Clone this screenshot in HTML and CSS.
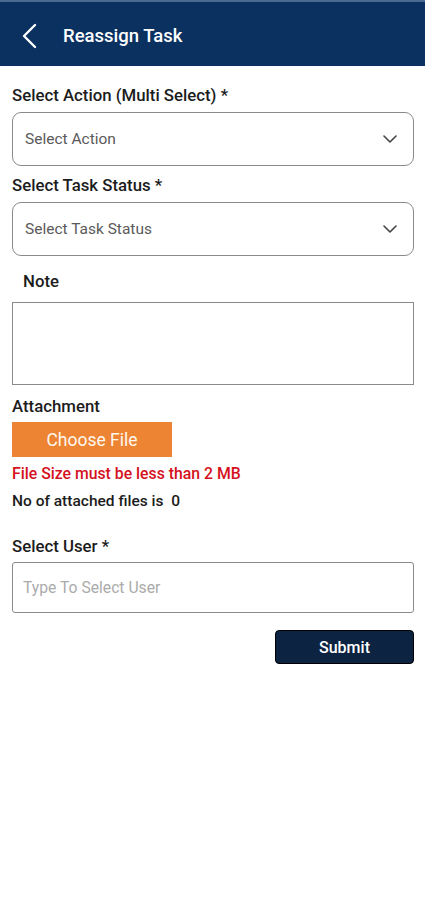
FILE: index.html
```html
<!DOCTYPE html>
<html lang="en">
<head>
    <meta charset="UTF-8">
    <meta name="viewport" content="width=device-width, initial-scale=1.0">
    <title>Reassign Task</title>
    <link rel="stylesheet" href="styles.css">
</head>
<body>
    <header>
        <a class="back" href="#">
            <svg width="16" height="26" viewBox="0 0 16 26"><path d="M14 2 L3 13 L14 24" fill="none" stroke="#fff" stroke-width="2.4" stroke-linecap="round" stroke-linejoin="round"/></svg>
        </a>
        <div class="title">Reassign Task</div>
    </header>
    <div class="container">
        <label class="lbl">Select Action (Multi Select) *</label>
        <div class="select">
            <span>Select Action</span>
            <svg width="14" height="8" viewBox="0 0 14 8"><path d="M1 1 L7 7 L13 1" fill="none" stroke="#444" stroke-width="1.6" stroke-linecap="round" stroke-linejoin="round"/></svg>
        </div>
        <label class="lbl">Select Task Status *</label>
        <div class="select">
            <span>Select Task Status</span>
            <svg width="14" height="8" viewBox="0 0 14 8"><path d="M1 1 L7 7 L13 1" fill="none" stroke="#444" stroke-width="1.6" stroke-linecap="round" stroke-linejoin="round"/></svg>
        </div>
        <label class="lbl note-lbl">Note</label>
        <textarea class="note"></textarea>
        <label class="lbl attach-lbl">Attachment</label>
        <button class="choose">Choose File</button>
        <p class="warn">File Size must be less than 2 MB</p>
        <p class="count">No of attached files is&nbsp; 0</p>
        <label class="lbl user-lbl">Select User *</label>
        <input class="user" type="text" placeholder="Type To Select User">
        <div class="actions">
            <button class="submit">Submit</button>
        </div>
    </div>
</body>
</html>
```

FILE: styles.css
```css
body {
    font-family: Roboto, "Noto Sans", Arial, sans-serif;
    margin: 0;
    padding: 0;
    background-color: #fff;
    color: #1c1c1c;
}
header {
    height: 66px;
    background-color: #0b3161;
    border-top: 2px solid #4a6a92;
    box-sizing: border-box;
    display: flex;
    align-items: center;
    padding: 3px 0 0 21px;
}
header .back {
    display: flex;
    width: 42px;
}
header .title {
    color: #fff;
    font-size: 18.5px;
    font-weight: 500;
}
.container {
    padding: 0 11px 0 12px;
    display: flex;
    flex-direction: column;
}
.lbl {
    display: block;
    font-size: 16.8px;
    font-weight: 500;
    line-height: 20px;
    color: #1c1c1c;
}
.container > .lbl:first-child {
    margin-top: 19px;
}
.select {
    height: 54px;
    box-sizing: border-box;
    border: 1.5px solid #8a8a8a;
    border-radius: 9px;
    margin: 7px 0 9px;
    display: flex;
    align-items: center;
    justify-content: space-between;
    padding: 0 16px 0 12px;
    font-size: 15.5px;
    color: #5a5a5a;
}
.note-lbl {
    margin: 6px 0 0 11px;
}
.note {
    height: 83px;
    box-sizing: border-box;
    border: 1.5px solid #8a8a8a;
    border-radius: 0;
    margin: 11px 0 0;
    resize: none;
    font-family: inherit;
}
.attach-lbl {
    margin-top: 11px;
}
.choose {
    width: 160px;
    height: 35px;
    margin-top: 6px;
    border: none;
    background-color: #ec8433;
    color: #fff7ee;
    font-family: inherit;
    font-size: 17.5px;
}
.warn {
    margin: 7px 0 0;
    color: #d4111d;
    font-size: 15.8px;
    font-weight: 500;
    line-height: 20px;
}
.count {
    margin: 7px 0 0;
    font-size: 15.5px;
    font-weight: 500;
    line-height: 20px;
}
.user-lbl {
    margin-top: 25px;
}
.user {
    height: 51px;
    box-sizing: border-box;
    border: 1.5px solid #8a8a8a;
    border-radius: 3px;
    margin-top: 6px;
    padding: 0 10px;
    font-family: inherit;
    font-size: 15.7px;
}
.user::placeholder {
    color: #ababab;
}
.actions {
    display: flex;
    justify-content: flex-end;
    margin-top: 17px;
}
.submit {
    width: 139px;
    height: 34px;
    border: 1px solid #000;
    border-radius: 4px;
    background-color: #0c2341;
    color: #fff;
    font-family: inherit;
    font-size: 16px;
    font-weight: 500;
}
```
